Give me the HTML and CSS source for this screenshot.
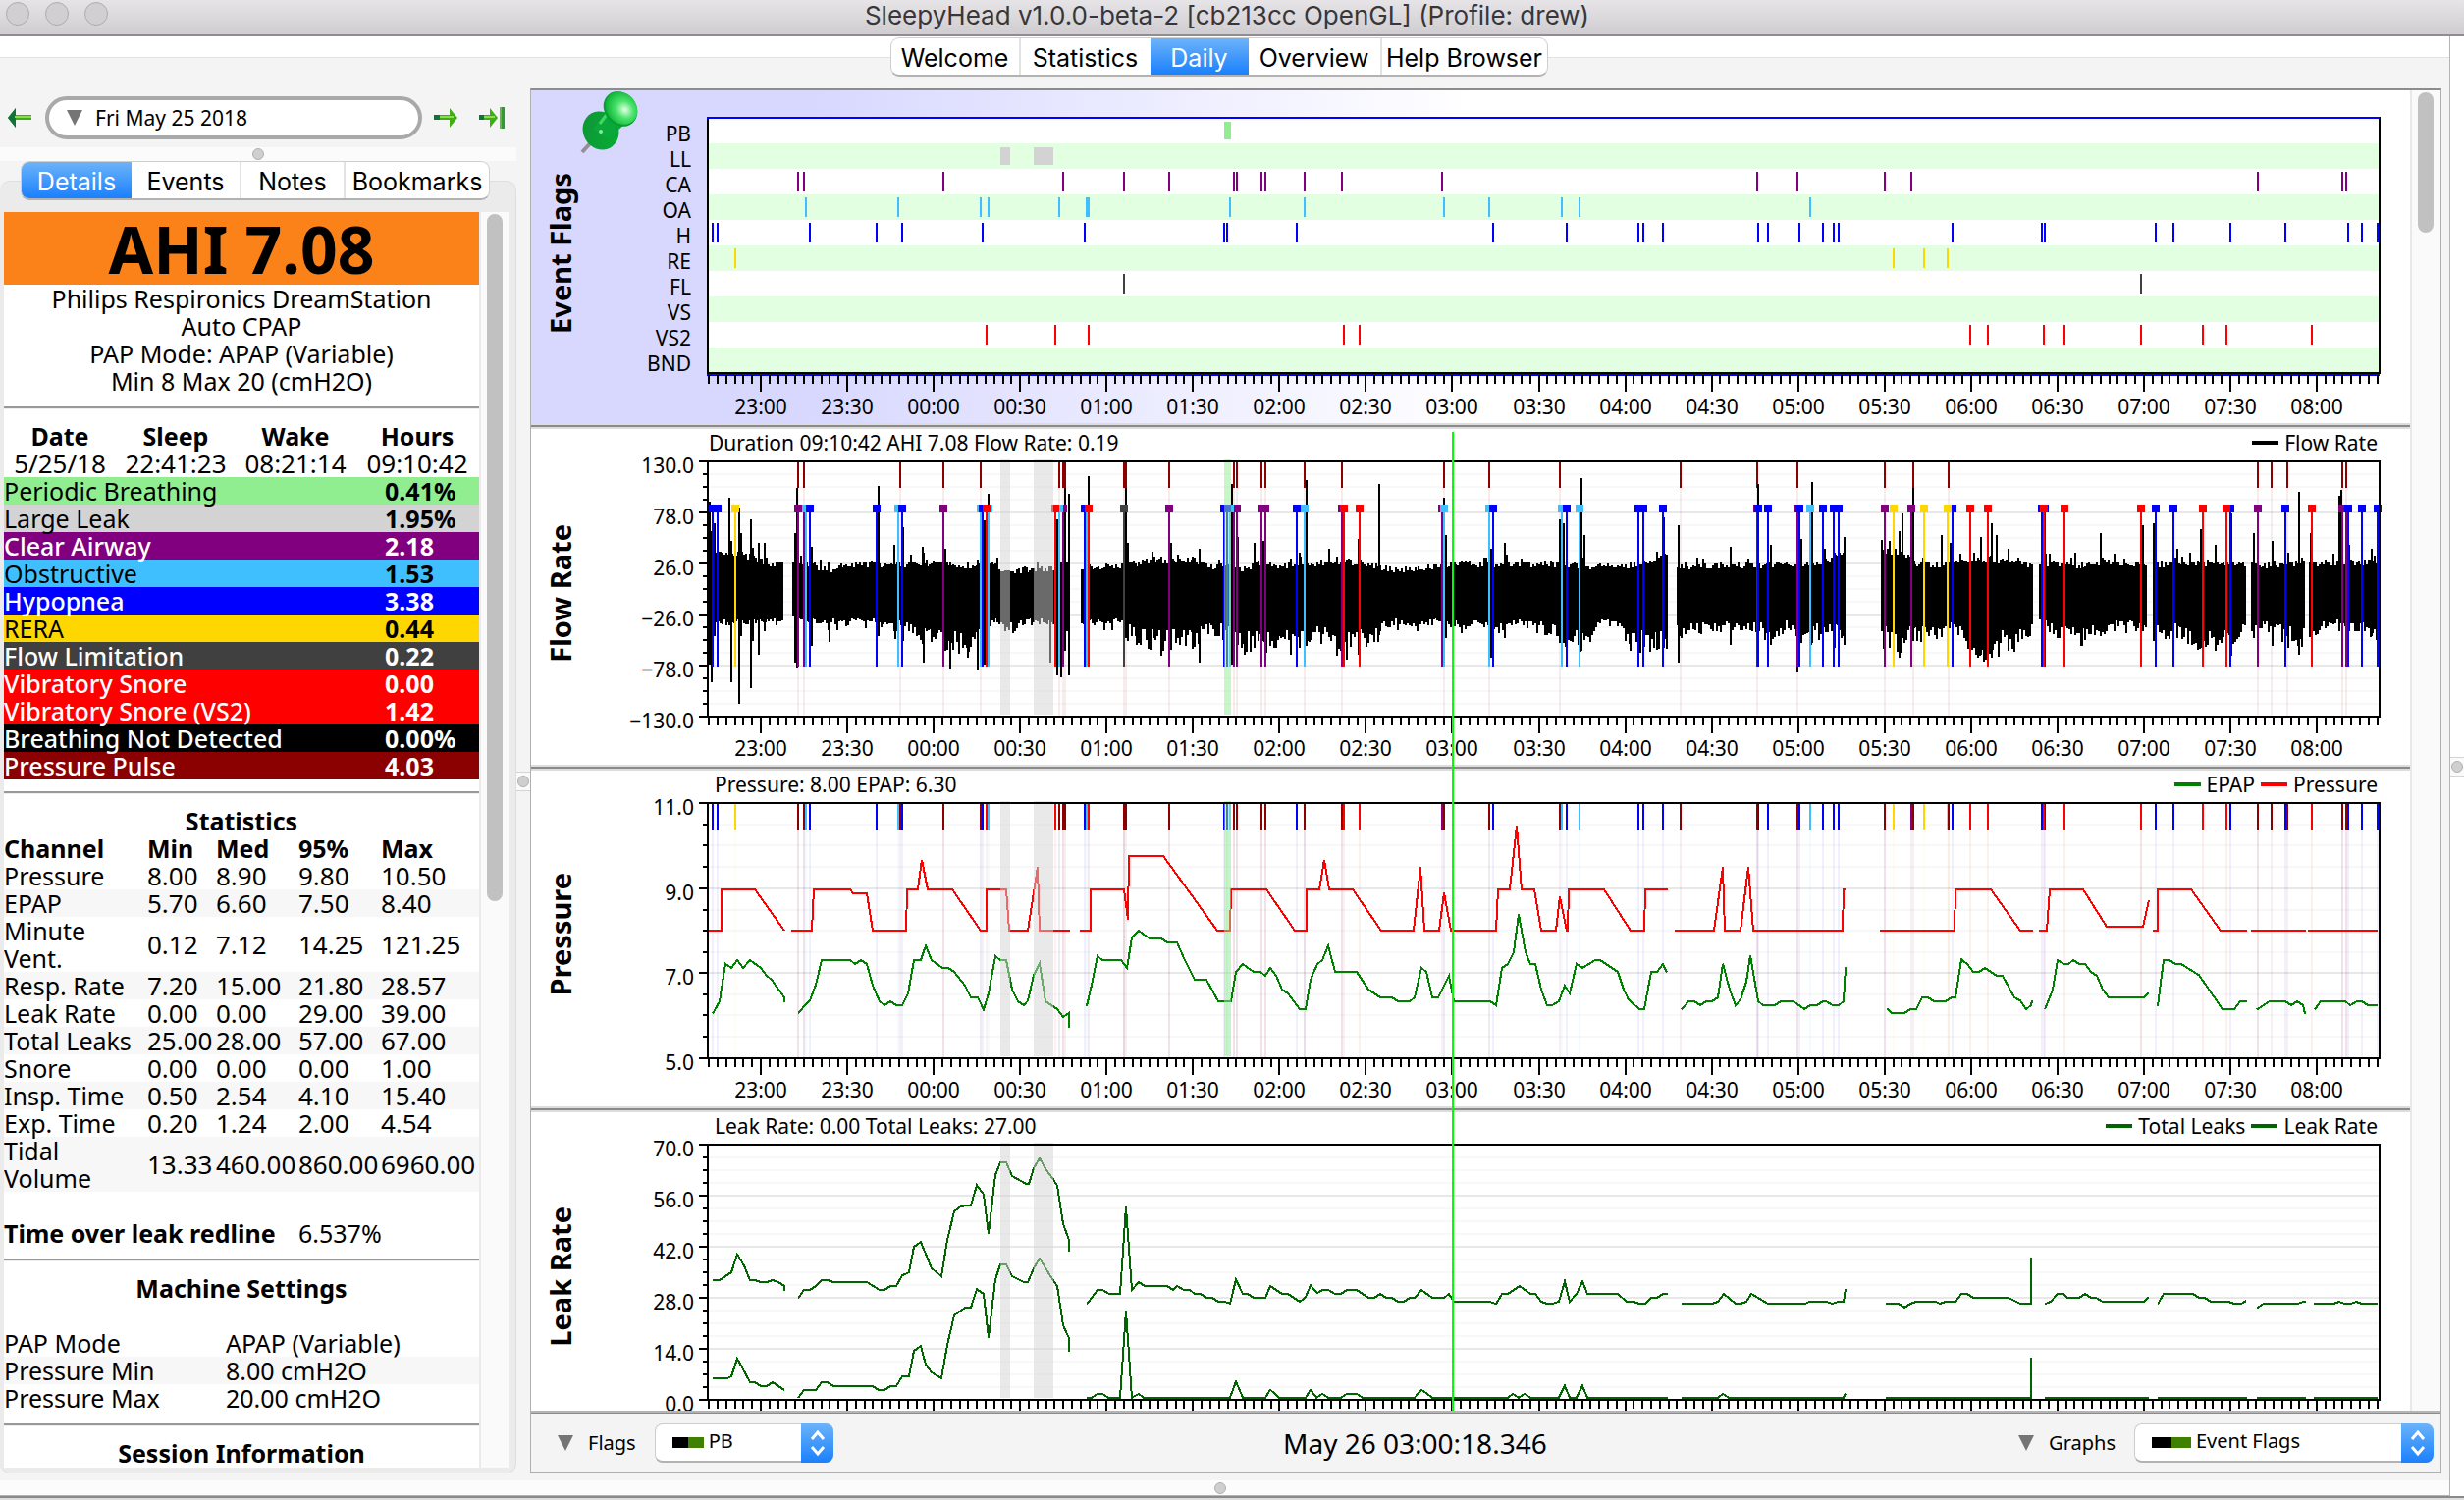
FILE: index.html
```html
<!DOCTYPE html>
<html lang="en">
<head>
<meta charset="utf-8">
<title>SleepyHead v1.0.0-beta-2</title>
<link rel="stylesheet" href="styles.css">
</head>
<body>
<header class="titlebar">
  <div class="lights"><span></span><span></span><span></span></div>
  <h1>SleepyHead v1.0.0-beta-2 [cb213cc OpenGL] (Profile: drew)</h1>
</header>

<div class="window">
  <main class="page">
    <nav class="tabs main-tabs">
      <button type="button" class="w-welcome">Welcome</button>
      <button type="button" class="w-statistics">Statistics</button>
      <button type="button" class="w-daily active">Daily</button>
      <button type="button" class="w-overview">Overview</button>
      <button type="button" class="w-help">Help Browser</button>
    </nav>

    <div class="columns">
      <aside class="sidebar">
        <div class="datebar">
          <button type="button" class="arrow" aria-label="Previous day">
            <svg width="28" height="24" viewBox="0 0 28 24"><path d="M2 12 10 2v7h16v5H10v8z" fill="#3fae12"/><path d="M2 12 10 2v20z" fill="#11733a"/><path d="M9 11h17" stroke="#8ade4e" stroke-width="2"/></svg>
          </button>
          <button type="button" class="date"><span class="tri"></span>Fri May 25 2018</button>
          <button type="button" class="arrow next" aria-label="Next day">
            <svg width="28" height="24" viewBox="0 0 28 24"><path d="M26 12 18 2v7H2v5h16v8z" fill="#3fae12"/><path d="M2 9h6v5H2z" fill="#11733a"/><path d="M8 11h14" stroke="#8ade4e" stroke-width="2"/></svg>
          </button>
          <button type="button" class="arrow last" aria-label="Most recent day">
            <svg width="30" height="24" viewBox="0 0 30 24"><path d="M21 12 13 2v7H2v5h11v8z" fill="#3fae12"/><path d="M2 9h5v5H2z" fill="#11733a"/><path d="M7 11h11" stroke="#8ade4e" stroke-width="2"/><path d="M23 1h5v22h-5z" fill="#2f9a3c"/><path d="M24 1v22" stroke="#8ade4e"/></svg>
          </button>
        </div>
        <div class="grip-row"><span class="dot"></span></div>
        <nav class="tabs side-tabs">
          <button type="button" class="w-details active">Details</button>
          <button type="button" class="w-events">Events</button>
          <button type="button" class="w-notes">Notes</button>
          <button type="button" class="w-bookmarks">Bookmarks</button>
        </nav>
        <div class="group">
          <div class="report">
            <div class="ahi">AHI 7.08</div>
            <div class="device">
              <div>Philips Respironics DreamStation</div>
              <div>Auto CPAP</div>
              <div>PAP Mode: APAP (Variable)</div>
              <div>Min 8 Max 20 (cmH2O)</div>
            </div>
            <hr>
            <table class="times">
              <tr><th class="t-date">Date</th><th class="t-sleep">Sleep</th><th class="t-wake">Wake</th><th>Hours</th></tr>
              <tr><td>5/25/18</td><td>22:41:23</td><td>08:21:14</td><td>09:10:42</td></tr>
            </table>
            <table class="events">
              <tr class="pb"><td>Periodic Breathing</td><td>0.41%</td></tr>
              <tr class="ll"><td>Large Leak</td><td>1.95%</td></tr>
              <tr class="ca"><td>Clear Airway</td><td>2.18</td></tr>
              <tr class="oa"><td>Obstructive</td><td>1.53</td></tr>
              <tr class="hy"><td>Hypopnea</td><td>3.38</td></tr>
              <tr class="re"><td>RERA</td><td>0.44</td></tr>
              <tr class="fl"><td>Flow Limitation</td><td>0.22</td></tr>
              <tr class="vs"><td>Vibratory Snore</td><td>0.00</td></tr>
              <tr class="vs"><td>Vibratory Snore (VS2)</td><td>1.42</td></tr>
              <tr class="bnd"><td>Breathing Not Detected</td><td>0.00%</td></tr>
              <tr class="pp"><td>Pressure Pulse</td><td>4.03</td></tr>
            </table>
            <hr>
            <h2>Statistics</h2>
            <table class="stats">
              <tr><th class="c-name">Channel</th><th class="c-min">Min</th><th class="c-med">Med</th><th class="c-95">95%</th><th>Max</th></tr>
              <tr><td>Pressure</td><td>8.00</td><td>8.90</td><td>9.80</td><td>10.50</td></tr>
              <tr class="alt"><td>EPAP</td><td>5.70</td><td>6.60</td><td>7.50</td><td>8.40</td></tr>
              <tr><td>Minute<br>Vent.</td><td>0.12</td><td>7.12</td><td>14.25</td><td>121.25</td></tr>
              <tr class="alt"><td>Resp. Rate</td><td>7.20</td><td>15.00</td><td>21.80</td><td>28.57</td></tr>
              <tr><td>Leak Rate</td><td>0.00</td><td>0.00</td><td>29.00</td><td>39.00</td></tr>
              <tr class="alt"><td>Total Leaks</td><td>25.00</td><td>28.00</td><td>57.00</td><td>67.00</td></tr>
              <tr><td>Snore</td><td>0.00</td><td>0.00</td><td>0.00</td><td>1.00</td></tr>
              <tr class="alt"><td>Insp. Time</td><td>0.50</td><td>2.54</td><td>4.10</td><td>15.40</td></tr>
              <tr><td>Exp. Time</td><td>0.20</td><td>1.24</td><td>2.00</td><td>4.54</td></tr>
              <tr class="alt"><td>Tidal<br>Volume</td><td>13.33</td><td>460.00</td><td>860.00</td><td>6960.00</td></tr>
              <tr class="redline"><th colspan="3">Time over leak redline</th><td colspan="2">6.537%</td></tr>
            </table>
            <hr>
            <h2>Machine Settings</h2>
            <table class="settings">
              <tr><td>PAP Mode</td><td>APAP (Variable)</td></tr>
              <tr class="alt"><td>Pressure Min</td><td>8.00 cmH2O</td></tr>
              <tr><td>Pressure Max</td><td>20.00 cmH2O</td></tr>
            </table>
            <hr>
            <h2>Session Information</h2>
          </div>
          <div class="scroll"><span class="thumb long"></span></div>
        </div>
      </aside>

      <div class="splitter"><span class="grip"><span class="dot"></span></span></div>

      <section class="graphs-frame">
        <div class="graphs-row">
          <div class="graphs">
            <section class="graph flags-graph">
              <h2>Event Flags</h2>
              <div class="head"></div>
              <svg id="flags" class="plot"></svg>
              <svg class="pin" width="60" height="66" viewBox="0 0 60 66">
                <defs>
                  <radialGradient id="cap" cx=".55" cy=".6" r=".6"><stop offset="0" stop-color="#e6ffe6"/><stop offset=".45" stop-color="#4be36c"/><stop offset="1" stop-color="#0cb436"/></radialGradient>
                  <linearGradient id="base" x1="0" y1="0" x2="1" y2="1"><stop offset="0" stop-color="#11933a"/><stop offset="1" stop-color="#02b030"/></linearGradient>
                </defs>
                <path d="M2 63 12 52" stroke="#998c99" stroke-width="4"/>
                <ellipse cx="21" cy="41" rx="18" ry="20" transform="rotate(-28 21 41)" fill="url(#base)"/>
                <path d="M13 39 30 18 46 34 28 50z" fill="#0aa838"/>
                <path d="M20 34 32 18" stroke="#3fd968" stroke-width="3"/>
                <ellipse cx="41" cy="19" rx="16" ry="19" transform="rotate(-40 41 19)" fill="#0a9c34"/>
                <ellipse cx="42" cy="18" rx="15" ry="18" transform="rotate(-40 42 18)" fill="url(#cap)"/>
                <circle cx="21" cy="42" r="2" fill="#8ae6a0"/>
              </svg>
            </section>
            <div class="divider"></div>
            <section class="graph">
              <h2>Flow Rate</h2>
              <div class="head"><span class="flow-title">Duration 09:10:42 AHI 7.08 Flow Rate: 0.19</span><span class="legend"><i class="k-flow"></i>Flow Rate</span></div>
              <svg id="flow" class="plot"></svg>
            </section>
            <div class="divider"></div>
            <section class="graph">
              <h2>Pressure</h2>
              <div class="head"><span>Pressure: 8.00 EPAP: 6.30</span><span class="legend"><i class="k-epap"></i>EPAP<i class="k-pressure"></i>Pressure</span></div>
              <svg id="pressure" class="plot"></svg>
            </section>
            <div class="divider"></div>
            <section class="graph">
              <h2>Leak Rate</h2>
              <div class="head"><span>Leak Rate: 0.00 Total Leaks: 27.00</span><span class="legend"><i class="k-leak"></i>Total Leaks<i class="k-leak"></i>Leak Rate</span></div>
              <svg id="leak" class="plot"></svg>
            </section>
            <span class="cursor"></span>
          </div>
          <div class="scroll graph-scroll"><span class="thumb short"></span></div>
        </div>
        <footer class="toolbar">
          <span class="tri"></span>
          <label for="flag-select">Flags</label>
          <span class="combo narrow">
            <select id="flag-select"><option>PB</option></select>
            <span class="stepper"><svg width="33" height="40" viewBox="0 0 33 40"><path d="m11 16 6-7 6 7M11 24l6 7 6-7" fill="none" stroke="#fff" stroke-width="3"/></svg></span>
          </span>
          <output>May 26 03:00:18.346</output>
          <span class="tri"></span>
          <label for="graph-select">Graphs</label>
          <span class="combo wide">
            <select id="graph-select"><option>Event Flags</option></select>
            <span class="stepper"><svg width="33" height="40" viewBox="0 0 33 40"><path d="m11 16 6-7 6 7M11 24l6 7 6-7" fill="none" stroke="#fff" stroke-width="3"/></svg></span>
          </span>
        </footer>
      </section>
    </div>
    <div class="bottom-grip"><span class="dot"></span></div>
  </main>
  <div class="right-rail"><span class="grip"><span class="dot"></span></span></div>
</div>
<div class="window-edge"></div>
<script src="charts.js"></script>
</body>
</html>
```
FILE: styles.css
```css
* { box-sizing: border-box; }

body {
  margin: 0;
  height: 100vh;
  display: flex;
  flex-direction: column;
  overflow: hidden;
  background: #fff;
  color: #000;
  font: 25px/28px "Noto Sans", "Open Sans", sans-serif;
}

h1, h2 { margin: 0; font-size: inherit; }

button {
  margin: 0;
  padding: 0;
  border: 0;
  background: none;
  color: inherit;
  font: inherit;
}

/* Title bar */
.titlebar {
  position: relative;
  flex: none;
  height: 37px;
  background: linear-gradient(#e6e4e6, #cfcdcf);
  border-bottom: 2px solid #8f8d90;
}
.titlebar h1 {
  text-align: center;
  font: 400 26px/32px Inter, sans-serif;
  color: #38363a;
  padding-right: 10px;
}
.lights {
  position: absolute;
  left: 6px;
  top: 2px;
  display: flex;
  gap: 16px;
}
.lights span {
  width: 24px;
  height: 24px;
  border-radius: 50%;
  background: #d1cfd1;
  border: 1px solid #aeacae;
}

/* Window body */
.window { flex: 1; min-height: 0; display: flex; }
.page {
  flex: 1;
  min-width: 0;
  display: flex;
  flex-direction: column;
  border-right: 1px solid #b4b4b4;
  background: linear-gradient(#fff 21px, #e2e2e2 21px, #e2e2e2 22px, #f4f4f4 22px);
}
.right-rail {
  width: 14px;
  display: flex;
  align-items: center;
  justify-content: center;
}
.window-edge {
  flex: none;
  height: 4px;
  border-top: 2px solid #8a8a8a;
  background: #dedede;
}

/* Segmented tabs */
.tabs {
  display: flex;
  height: 40px;
  border: 1px solid #cfcfcf;
  border-bottom: 2px solid #b2b2b2;
  border-radius: 9px;
  background: #fff;
  overflow: hidden;
  font: 25px/36px Inter, sans-serif;
}
.tabs button { padding-top: 2px; border-left: 2px solid #e2e2e2; white-space: nowrap; }
.tabs button:first-child, .tabs .active, .tabs .active + button { border-left: 0; }
.tabs .active { background: linear-gradient(#6cb3fa, #1a80fd); color: #fff; }
.main-tabs { flex: none; align-self: center; margin-top: 1px; margin-left: -12px; }
.w-welcome { width: 130px; }
.w-statistics { width: 134px; }
.w-daily { width: 100px; }
.w-overview { width: 134px; }
.w-help { width: 170px; }
.side-tabs { position: relative; z-index: 1; width: 478px; margin-left: 21px; }
.w-details { width: 112px; }
.w-events { width: 110px; }
.w-notes { width: 106px; }
.w-bookmarks { flex: 1; }

/* Two column area */
.columns { flex: 1; min-height: 0; display: flex; padding: 12px 8px 7px 0; }

.dot {
  display: block;
  width: 12px;
  height: 12px;
  border-radius: 50%;
  background: #cfcfcf;
  border: 1px solid #b0b0b0;
}
.grip {
  display: flex;
  align-items: center;
  justify-content: center;
  width: 14px;
  height: 20px;
  border: solid #d4d4d4;
  border-width: 1px 0;
  background: #fafafa;
}
.splitter { width: 14px; display: flex; align-items: center; }

/* Sidebar */
.sidebar { width: 526px; flex: none; display: flex; flex-direction: column; }
.datebar { display: flex; align-items: center; height: 60px; padding: 0 6px; }
.arrow { display: flex; }
.date {
  display: flex;
  align-items: center;
  gap: 13px;
  width: 384px;
  height: 44px;
  margin-left: 12px;
  padding-left: 18px;
  border: 4px solid #a9a9a9;
  border-radius: 22px;
  background: #fff;
  font-size: 21px;
}
.tri {
  border: solid transparent;
  border-width: 16px 8px 0;
  border-top-color: #757575;
}
.next { margin-left: 10px; }
.last { margin-left: 18px; }
.grip-row {
  height: 14px;
  display: flex;
  align-items: center;
  justify-content: center;
  background: #fbfbfb;
}
.group {
  flex: 1;
  min-height: 0;
  display: flex;
  margin-top: -20px;
  padding: 31px 7px 5px 4px;
  border: 1px solid #dfdfdf;
  border-left: 0;
  border-radius: 10px;
  background: #ebebeb;
}
.report { flex: 1; overflow: hidden; background: #fff; }
.scroll {
  width: 28px;
  margin-left: 2px;
  padding: 2px 6px;
  background: #fafafa;
}
.thumb { display: block; width: 16px; border-radius: 8px; background: #c1c1c1; }
.long { height: 700px; }
.short { height: 143px; }

.ahi {
  height: 74px;
  background: #fb8218;
  text-align: center;
  font-size: 66px;
  font-weight: 700;
  line-height: 74px;
}
.device { text-align: center; }
hr { height: 3px; margin: 12px 0 13px; border: 0; border-top: 2px solid #999; background: #eee; }
.report h2 { text-align: center; font-weight: 700; }
table { width: 100%; border-collapse: collapse; table-layout: fixed; }
td, th { padding: 0; text-align: left; white-space: nowrap; }
.times th, .times td { text-align: center; }
.times td { font-size: 26px; }
.t-date { width: 114px; }
.t-sleep, .t-wake { width: 122px; }
.events td:last-child { width: 96px; font-weight: 700; }
.pb { background: #90ee90; }
.ll { background: #d3d3d3; }
.ca { background: #800080; }
.oa { background: #40bfff; }
.hy { background: #00f; }
.re { background: #ffd700; }
.fl { background: #404040; }
.vs { background: #f00; }
.bnd { background: #000; }
.pp { background: #8b0000; }
.ca, .hy, .fl, .vs, .bnd, .pp { color: #fff; font-weight: 500; }
.c-name { width: 146px; }
.c-min { width: 70px; }
.c-med, .c-95 { width: 84px; }
.stats td + td { font-size: 26px; }
.alt { background: #f7f7f7; }
.redline > * { padding-top: 28px; }
.settings { margin-top: 28px; }
.settings td:first-child { width: 226px; }

/* Graph area */
.graphs-frame {
  flex: 1;
  min-width: 0;
  display: flex;
  flex-direction: column;
  border: solid #b0b0b0;
  border-width: 2px 1px;
  border-top-color: #8c8c8c;
}
.graphs-row { flex: 1; min-height: 0; display: flex; border-bottom: 2px solid #b4b4b4; }
.graphs {
  position: relative;
  flex: 1;
  min-width: 0;
  overflow: hidden;
  background: #fff;
}
.graph-scroll { width: 31px; margin-left: 0; border-left: 2px solid #e8e8e8; }
.graph {
  position: relative;
  display: grid;
  grid-template-columns: 60px minmax(0, 1fr);
  grid-template-rows: 28px 314px;
}
.flags-graph {
  grid-template-rows: 23px 316px;
  background: linear-gradient(90deg, #d8d8ff 15%, #fff 50%);
}
.graph h2 {
  grid-row: 1 / 3;
  justify-self: center;
  align-self: center;
  writing-mode: vertical-rl;
  transform: rotate(180deg);
  font: 700 29px/32px "Noto Sans", sans-serif;
  margin-bottom: 8px;
}
.head {
  display: flex;
  justify-content: space-between;
  padding: 0 33px 0 127px;
  font-size: 21px;
}
.flow-title { margin-left: -6px; }
.legend { display: flex; align-items: center; }
.legend i { width: 27px; height: 4px; margin: 0 6px; }
.k-flow { background: #000; }
.k-epap { background: #008000; }
.k-pressure { background: #f00; }
.k-leak { background: #006400; }
.plot { display: block; width: 100%; height: 100%; overflow: visible; font-size: 21px; }
.divider {
  height: 6px;
  background: linear-gradient(#ddd 2px, #8a8a8a 2px, #8a8a8a 4px, #ddd 4px);
}
.pin { position: absolute; left: 50px; top: 0; }
.cursor {
  position: absolute;
  top: 348px;
  bottom: 0;
  left: calc(180px + (100% - 211px) * 0.445);
  width: 2px;
  background: #0f0;
}

/* Bottom toolbar */
.toolbar {
  flex: none;
  display: flex;
  align-items: center;
  height: 60px;
  padding: 0 7px 0 27px;
  border-top: 1px solid #8c8c8c;
  font-size: 20px;
}
.toolbar label { margin: 0 19px 0 15px; }
.toolbar output { flex: 1; text-align: center; font-size: 28px; padding-right: 22px; }
.combo { position: relative; }
.combo select {
  appearance: none;
  display: block;
  width: 100%;
  height: 40px;
  padding: 0 0 2px 54px;
  border: 1px solid #cdcdcd;
  border-bottom: 2px solid #b2b2b2;
  border-radius: 8px;
  background: linear-gradient(90deg, #000 50%, #408000 50%) 17px 13px / 32px 11px no-repeat #fff;
  color: #000;
  font: inherit;
}
.narrow { width: 182px; }
.wide { width: 305px; }
.wide select { padding-left: 62px; background-size: 40px 11px; }
.stepper {
  position: absolute;
  right: 0;
  top: 0;
  width: 33px;
  height: 40px;
  border-radius: 0 8px 8px 0;
  background: linear-gradient(#6cb3fa, #1a80fd);
  pointer-events: none;
}

.bottom-grip {
  flex: none;
  height: 16px;
  display: flex;
  align-items: center;
  justify-content: center;
  padding-right: 9px;
  background: #fcfcfc;
  border-bottom: 1px solid #b4b4b4;
}
```
FILE: charts.js
```
// Night length in minutes, and the offset of the first half-hour mark.
const NIGHT = 580.2;
const FIRST_MARK = 18.4;

const clockA = n => n * 0.21742 - 62.05;
const clockB = n => n * 0.21959 + 265.23;
const times = (a, b) => a.map(clockA).concat(b.map(clockB));

const flags = {
  CA: { color: "#800080", at: times([430,439,661,853,950,1022,1125,1130,1169,1176,1238,1298,1458],[450,515,652,695,1242,1375,1381]) },
  OA: { color: "#40bfff", at: times([442,589,721,733,846,891,894,1119,1238,1461],[27,142,170,534]) },
  H: { color: "#0000ff", at: times([294,301,448,555,595,724,887,1110,1114,1226],[34,149,263,270,301,453,468,518,555,571,580,760,900,906,1080,1108,1198,1285,1384,1406,1432]) },
  RE: { color: "#ffd700", at: times([329],[667,714,751]) },
  FL: { color: "#404040", at: times([950],[1058]) },
  VS2: { color: "#ff0000", at: times([730,840,893,1301,1326],[788,816,903,937,1058,1155,1192,1328]) },
  PP: { color: "#8b0000", at: times([430,439,592,661,721,846,853,856,950,953,1022,1125,1130,1169,1176,1238,1298,1461],[27,139,329,450,515,652,698,754,1242,1263,1288,1375,1381]) }
};
const spans = [
  { row: 0, color: "#90ee90", from: clockA(1110), to: clockA(1120) },
  { row: 1, color: "#d3d3d3", from: clockA(753), to: clockA(768) },
  { row: 1, color: "#d3d3d3", from: clockA(806), to: clockA(837) }
];

// Line series: runs of time, level pairs; levels count in thirds of a pixel from the top of the sheet.
const pressure = {
  a: [[286,504,307,504,307,378,361,378,408,504],
    [419,504,452,504,455,378,512,378,517,390,540,390,549,504,602,504,603,378,621,378,627,287,637,378,675,378,721,504,730,504,731,378,762,378,767,504,797,504,812,310,815,504,864,504],
    [880,504,896,504,897,378,950,378,956,470,957,276,1013,276,1098,504,1119,504,1120,378,1177,378,1223,504,1241,504,1242,378,1262,378,1270,287,1277,378,1315,378,1360,504,1412,504,1423,310,1430,504,1453,504,1461,388,1471,504,1507,504]],
  b: [[0,504,38,504,41,378,59,378,71,184,78,378,99,378,109,504,133,504,139,400,149,504,152,504,153,378,209,378,251,504,273,504,274,378,309,378],
    [321,504,382,504,397,310,400,504,425,504,437,310,444,504,586,504,587,378,591,378],
    [644,504,763,504,764,378,820,378,866,504,886,504],
    [896,504,909,504,913,378,966,378,1003,492,1061,492,1069,411],
    [1076,504,1083,504,1084,378,1137,378,1183,504,1225,504],
    [1231,504,1318,504],[1321,504,1431,504]]
};
const epap = {
  a: [[294,758,304,720,314,605,323,618,333,594,342,618,352,594,370,618,380,642,388,654,408,708,408,722],
    [429,758,440,732,449,718,458,670,467,594,512,594,520,606,530,594,540,606,549,672,559,720,568,732,577,720,587,732,596,732,605,696,615,594,625,594,633,550,643,594,660,618,670,618,678,630,696,672,706,708,716,708,725,745,734,696,744,582,753,594,762,594,771,684,781,720,790,732,797,718,806,640,815,604,825,720,844,744,853,768,862,755,862,800],
    [890,734,897,684,907,582,916,594,945,594,954,618,963,526,973,504,990,528,1010,528,1018,540,1035,540,1046,588,1063,654,1082,654,1101,720,1120,720,1129,630,1139,606,1157,630,1167,630,1176,642,1183,618,1192,642,1202,684,1212,696,1230,744,1239,744,1248,654,1258,606,1267,594,1276,550,1286,630,1321,630,1340,684,1358,708,1377,708,1387,720,1406,720,1414,708,1424,618,1433,630,1442,708,1452,708,1468,642,1477,720,1507,720]],
  b: [[0,720,29,720,38,732,47,618,56,606,66,570,74,454,84,570,93,606,100,606,109,684,118,732,127,732,137,720,146,672,155,696,165,606,174,618,194,594,203,594,230,630,239,684,248,715,264,744,273,744,283,630,293,630,301,606,308,632],
    [332,745,342,720,352,720,361,732,370,720,380,720,389,708,397,605,407,684,417,732,424,715,433,660,440,580,452,720,460,732,478,732,488,720,508,720,525,744,535,732,545,732,554,720,560,720,570,732,580,732,587,720,590,616],
    [655,742,664,756,683,756,692,744,702,744,711,708,720,708,730,720,748,720,758,708,764,708,773,592,783,606,792,630,802,630,811,618,829,642,838,642,857,708,866,718,876,744,884,732,885,718],
    [906,745,917,684,926,594,936,606,943,606,950,594,960,606,969,606,978,630,988,642,997,684,1006,708,1062,708,1069,694],
    [1083,734,1093,594,1102,594,1112,606,1121,606,1149,640,1186,744,1205,744,1214,720,1225,720],
    [1241,745,1261,720,1286,720,1295,732,1304,720,1313,732,1316,758],
    [1332,745,1341,720,1380,720,1388,732,1398,720,1406,720,1416,732,1431,732]]
};
const totalLeaks = {
  a: [[293,522,304,522,323,498,333,443,343,478,352,522,361,522,370,528,380,528,389,522,398,528,408,540,408,554],
    [429,578,439,552,449,552,458,540,467,522,477,522,486,528,540,528,559,552,568,552,577,540,587,540,596,508,606,498,615,420,625,406,643,486,659,510,668,400,678,312,690,296,706,294,715,232,725,260,734,380,744,200,753,162,762,162,771,204,795,229,798,229,806,180,815,149,826,186,837,214,844,234,853,350,862,400,862,434],
    [890,596,907,552,916,552,926,564,944,564,953,298,963,552,973,528,982,540,1019,540,1028,552,1034,540,1046,552,1054,552,1062,564,1072,564,1082,576,1091,576,1101,588,1111,588,1119,594,1129,520,1139,564,1148,564,1157,576,1176,576,1183,540,1202,564,1212,564,1230,588,1239,574,1248,538,1258,562,1267,552,1276,552,1286,564,1296,564,1305,552,1321,552,1340,576,1350,576,1358,564,1368,576,1377,576,1387,588,1396,588,1405,576,1414,576,1424,552,1442,576,1460,576,1468,564,1476,588,1507,588]],
  b: [[0,588,29,588,38,595,47,564,56,564,75,540,93,564,100,564,109,588,118,594,127,594,137,588,146,526,155,588,165,564,174,526,183,564,230,564,244,588,255,588,264,594,274,594,283,576,293,576,302,564,309,564],
    [331,594,380,594,389,588,398,564,417,594,424,594,433,588,441,564,468,594,526,594,533,588,560,588,570,594,578,588,587,588,590,550],
    [654,594,674,594,683,606,693,594,702,588,733,588,740,594,748,588,764,588,773,564,783,564,792,576,848,576,866,594,884,594,884,453],
    [906,595,915,588,925,564,934,564,941,576,960,576,969,564,978,576,986,576,997,588,1062,588,1069,574],
    [1083,596,1093,564,1140,564,1149,576,1158,576,1168,588,1196,588,1204,594,1215,594,1224,586],
    [1241,607,1251,594,1305,594,1314,588,1318,588],
    [1330,594,1362,594,1370,588,1378,594,1389,594,1397,588,1406,594,1431,594]]
};
const leakRate = {
  a: [[293,822,316,822,323,816,333,762,343,800,352,834,361,834,370,846,380,846,389,834,408,858],
    [429,882,439,858,458,858,467,834,477,834,486,846,549,846,558,858,568,858,577,846,587,846,596,816,606,816,615,738,625,724,634,780,643,804,659,822,668,720,678,630,696,606,706,606,715,550,725,564,734,698,744,520,753,474,762,474,771,510,790,528,797,528,806,486,815,455,826,490,836,518,844,540,853,660,862,700,862,740],
    [890,881,898,881,907,870,916,870,925,881,944,881,953,616,963,881,973,870,981,881,1119,881,1129,832,1139,881,1176,881,1183,857,1198,881,1240,881,1248,857,1257,881,1267,870,1276,881,1296,881,1305,870,1321,870,1330,881,1414,881,1424,857,1442,881,1507,881]],
  b: [[0,881,56,881,65,870,74,881,83,870,92,881,137,881,146,845,155,881,165,881,174,845,183,881,309,881],
    [331,881,388,881,397,870,406,881,587,881,590,868],
    [654,881,884,881,884,760],[906,881,1069,881],[1083,881,1225,881],[1241,881,1318,881],[1330,881,1431,881]]
};

// Flow envelope: time, upper level, lower level. Breaths between the key points vary at random.
const envelope = {
  a: [[286,400,640,303,405,610,340,405,610,380,430,600,408,435,600],
    [422,435,590,450,435,605,480,455,605,500,440,605,550,432,600,575,440,645,600,435,615,640,430,675,680,440,715,718,440,715,730,430,590,745,440,610,770,455,640,800,450,600,864,445,635],
    [882,450,640,900,440,610,950,440,600,970,430,670,1000,420,690,1030,425,690,1060,420,690,1090,440,635,1110,435,655,1140,450,690,1170,430,700,1200,440,680,1240,440,655,1290,430,690,1330,430,690,1350,440,650,1380,452,605,1420,445,620,1450,440,600,1480,434,620,1507,432,610]],
  b: [[0,434,610,40,437,645,60,434,610,100,434,635,139,434,645,150,440,690,180,440,690,200,440,610,230,440,615,250,440,705,290,420,710,309,410,700],
    [325,440,650,400,438,630,450,438,630,470,435,680,500,435,620,515,435,640,530,430,680,560,425,640,591,400,650],
    [648,390,665,680,400,700,700,430,675,740,440,650,760,430,610,790,420,710,820,420,730,860,430,690,886,440,650],
    [897,440,610,910,430,630,960,440,690,1000,430,640,1040,432,610,1066,430,630],
    [1077,435,665,1120,430,650,1160,430,710,1200,430,700,1224,440,620],
    [1232,420,675,1250,440,620,1290,435,675,1317,430,675],
    [1324,435,650,1370,430,600,1390,430,630,1433,430,650]]
};
const spikes = {
  a: [288,243,740,291,333,795,296,310,655,320,232,620,323,362,795,329,400,740,335,262,860,338,340,655,354,298,812,357,385,670,367,370,710,377,370,640,425,340,735,428,200,750,451,382,685,480,450,672,558,196,655,583,375,640,598,322,668,628,382,678,630,400,735,665,388,700,673,430,752,700,430,720,716,420,758,733,220,740,727,300,740,833,450,735,843,298,775,850,430,780,856,200,700,862,220,775,893,165,740,953,200,660,956,370,668,1010,410,715,1025,370,680,1070,388,735,1122,190,740,1132,352,680,1143,440,710,1158,370,690,1172,363,670,1216,430,710,1230,400,690,1241,178,685,1277,388,650,1290,410,715,1305,420,725,1324,358,710,1357,190,650,1461,232,680,1464,346,660],
  b: [30,388,720,52,370,660,139,298,675,145,310,675,173,172,698,177,346,665,250,430,700,303,292,690,326,316,735,409,382,680,453,190,655,472,376,680,515,430,765,520,358,675,537,184,675,558,388,625,573,400,690,589,352,680,660,364,690,676,334,720,680,280,640,698,200,670,742,346,655,757,370,600,804,352,710,822,310,720,829,346,665,848,388,700,953,400,650,965,430,685,993,340,655,1061,316,640,1078,310,668,1114,388,660,1152,328,690,1176,376,700,1200,280,715,1235,340,660,1266,364,685,1290,400,690,1307,214,710,1326,340,655,1370,226,640,1374,208,600,1387,376,640,1422,388,655]
};

const LEFT = 120, RIGHT = 31, TOP = 5, TALL = 260;

function rect(x, y, w, h, fill, extra) {
  return `<rect x="${x}" y="${y}" width="${w}" height="${h}" fill="${fill}" ${extra || ""}/>`;
}

function timeAxis(X, y, labelled = true) {
  let out = "";
  for (let i = -6; ; i++) {
    const t = FIRST_MARK + i * 3;
    if (t > NIGHT) break;
    const major = i % 10 === 0;
    out += rect(X(t) - 1, y, 2, major ? 17 : 9, "#000");
    if (major && labelled) {
      const clock = (23 * 60 + i * 3) % 1440;
      const label = String(Math.floor(clock / 60)).padStart(2, "0") + ":" + String(clock % 60).padStart(2, "0");
      out += `<text x="${X(t)}" y="${y + 40}" text-anchor="middle">${label}</text>`;
    }
  }
  return out;
}

function valueGrid(W, labels) {
  const step = TALL / (labels.length - 1);
  let out = "";
  labels.forEach((label, i) => {
    const y = Math.round(TOP + i * step);
    for (let q = 0; q < 4 && (i < labels.length - 1 || q === 0); q++) {
      const yy = Math.round(y + q * step / 4);
      if (q || (i && i < labels.length - 1)) out += rect(LEFT, yy - 1, W, 2, q ? "#f8f8f8" : "#e8e8e8");
      out += q ? rect(LEFT - 5, yy - 1, 5, 2, "#000") : rect(LEFT - 9, yy - 1, 9, 2, "#000");
    }
    out += `<text x="${LEFT - 14}" y="${y + 12}" text-anchor="end">${label}</text>`;
  });
  return out;
}

function frame(W) {
  return rect(LEFT - 1, TOP - 1, W + 2, 2, "#000") + rect(LEFT - 1, TOP + TALL - 1, W + 2, 2, "#000") +
    rect(LEFT - 1, TOP, 2, TALL, "#000") + rect(LEFT + W - 1, TOP, 2, TALL, "#000");
}

function spanBands(X, list = spans) {
  return list.map(s => rect(X(s.from), TOP - 2, X(s.to) - X(s.from), TALL, s.color, 'fill-opacity=".5"')).join("");
}

function line(X, series, origin, color) {
  const run = clock => pts => {
    let d = "";
    for (let i = 0; i < pts.length; i += 2) {
      d += (i ? "L" : "M") + X(clock(pts[i])).toFixed(1) + " " + (TOP + (pts[i + 1] - origin) / 3).toFixed(1);
    }
    return d;
  };
  const d = series.a.map(run(clockA)).join("") + series.b.map(run(clockB)).join("");
  return `<path d="${d}" fill="none" stroke="${color}" stroke-width="2" shape-rendering="crispEdges"/>`;
}

function waveform(X) {
  let seed = 7;
  const rnd = () => (seed = (seed * 16807) % 2147483647) / 2147483647;
  let out = "";
  const bar = (x, top, bottom) => {
    out += `M${Math.round(x)} ${Math.round(TOP + (top - 120) / 3)}V${Math.round(TOP + (bottom - 120) / 3)}`;
  };
  const fill = (clock, pts) => {
    for (let i = 0; i + 3 < pts.length; i += 3) {
      const [t0, u0, l0, t1, u1, l1] = pts.slice(i, i + 6);
      const x0 = X(clock(t0)), x1 = X(clock(t1));
      for (let x = x0; x < x1; x += 2) {
        const f = (x - x0) / (x1 - x0);
        const lower = l0 + (l1 - l0) * f, upper = u0 + (u1 - u0) * f;
        const depth = Math.max(12, (lower - 580) * 0.7);
        bar(x, upper + 10 - rnd() * 20 - (rnd() > 0.93 ? 22 : 0), lower + 12 - rnd() * depth + (rnd() > 0.92 ? 22 : 0));
      }
    }
  };
  envelope.a.forEach(p => fill(clockA, p));
  envelope.b.forEach(p => fill(clockB, p));
  for (const [list, clock] of [[spikes.a, clockA], [spikes.b, clockB]]) {
    for (let i = 0; i < list.length; i += 3) bar(X(clock(list[i])), list[i + 1], list[i + 2]);
  }
  return `<path d="${out}" stroke="#000" stroke-width="2" shape-rendering="crispEdges"/>`;
}

function drawFlags(X, W) {
  const rows = ["PB", "LL", "CA", "OA", "H", "RE", "FL", "VS", "VS2", "BND"];
  let out = "";
  rows.forEach((name, i) => {
    const y = TOP + i * 26;
    out += rect(LEFT, y, W, 26, i % 2 ? "#e2ffe2" : "#fff");
    out += `<text x="${LEFT - 17}" y="${y + 24}" text-anchor="end">${name}</text>`;
    if (flags[name]) flags[name].at.forEach(t => { out += rect(X(t) - 1, y + 3, 2, 20, flags[name].color); });
  });
  spans.forEach(s => { out += rect(X(s.from), TOP + s.row * 26 + 4, X(s.to) - X(s.from), 18, s.color); });
  return out + frame(W) + rect(LEFT - 1, TOP - 1, W + 1, 2, "#00f") + rect(LEFT - 1, TOP + TALL + 1, W + 1, 2, "#00f") +
    timeAxis(X, TOP + TALL + 2);
}

function drawFlow(X, W) {
  let out = valueGrid(W, ["130.0", "78.0", "26.0", "−26.0", "−78.0", "−130.0"]);
  flags.PP.at.forEach(t => {
    out += rect(X(t) - 1, TOP, 2, TALL, "#8b0000", 'fill-opacity=".07"') + rect(X(t) - 1, TOP, 2, 27, "#8b0000");
  });
  out += waveform(X);
  for (const name of ["CA", "OA", "H", "RE", "FL", "VS2"]) {
    flags[name].at.forEach(t => {
      out += rect(X(t) - 1, TOP + 44, 2, 165, flags[name].color) + rect(X(t) - 4, TOP + 44, 8, 8, flags[name].color);
    });
  }
  return out + spanBands(X) + frame(W) + timeAxis(X, TOP + TALL);
}

function drawPressure(X, W) {
  let out = valueGrid(W, ["11.0", "9.0", "7.0", "5.0"]);
  for (const name of ["CA", "OA", "H", "RE", "FL", "VS2", "PP"]) {
    flags[name].at.forEach(t => {
      out += rect(X(t) - 1, TOP, 2, TALL, flags[name].color, 'fill-opacity=".06"') + rect(X(t) - 1, TOP, 2, 27, flags[name].color);
    });
  }
  return out + line(X, pressure, 114, "#f00") + line(X, epap, 114, "#008000") + spanBands(X) + frame(W) + timeAxis(X, TOP + TALL);
}

function drawLeak(X, W) {
  return valueGrid(W, ["70.0", "56.0", "42.0", "28.0", "14.0", "0.0"]) +
    line(X, totalLeaks, 108, "#006400") + line(X, leakRate, 108, "#006400") +
    spanBands(X, spans.filter(s => s.row === 1)) + frame(W) + timeAxis(X, TOP + TALL, false);
}

function render() {
  for (const [id, draw] of [["flags", drawFlags], ["flow", drawFlow], ["pressure", drawPressure], ["leak", drawLeak]]) {
    const svg = document.getElementById(id);
    const W = svg.clientWidth - LEFT - RIGHT;
    svg.innerHTML = draw(t => Math.round(LEFT + t / NIGHT * W), W);
  }
}
render();
addEventListener("resize", render);
```
